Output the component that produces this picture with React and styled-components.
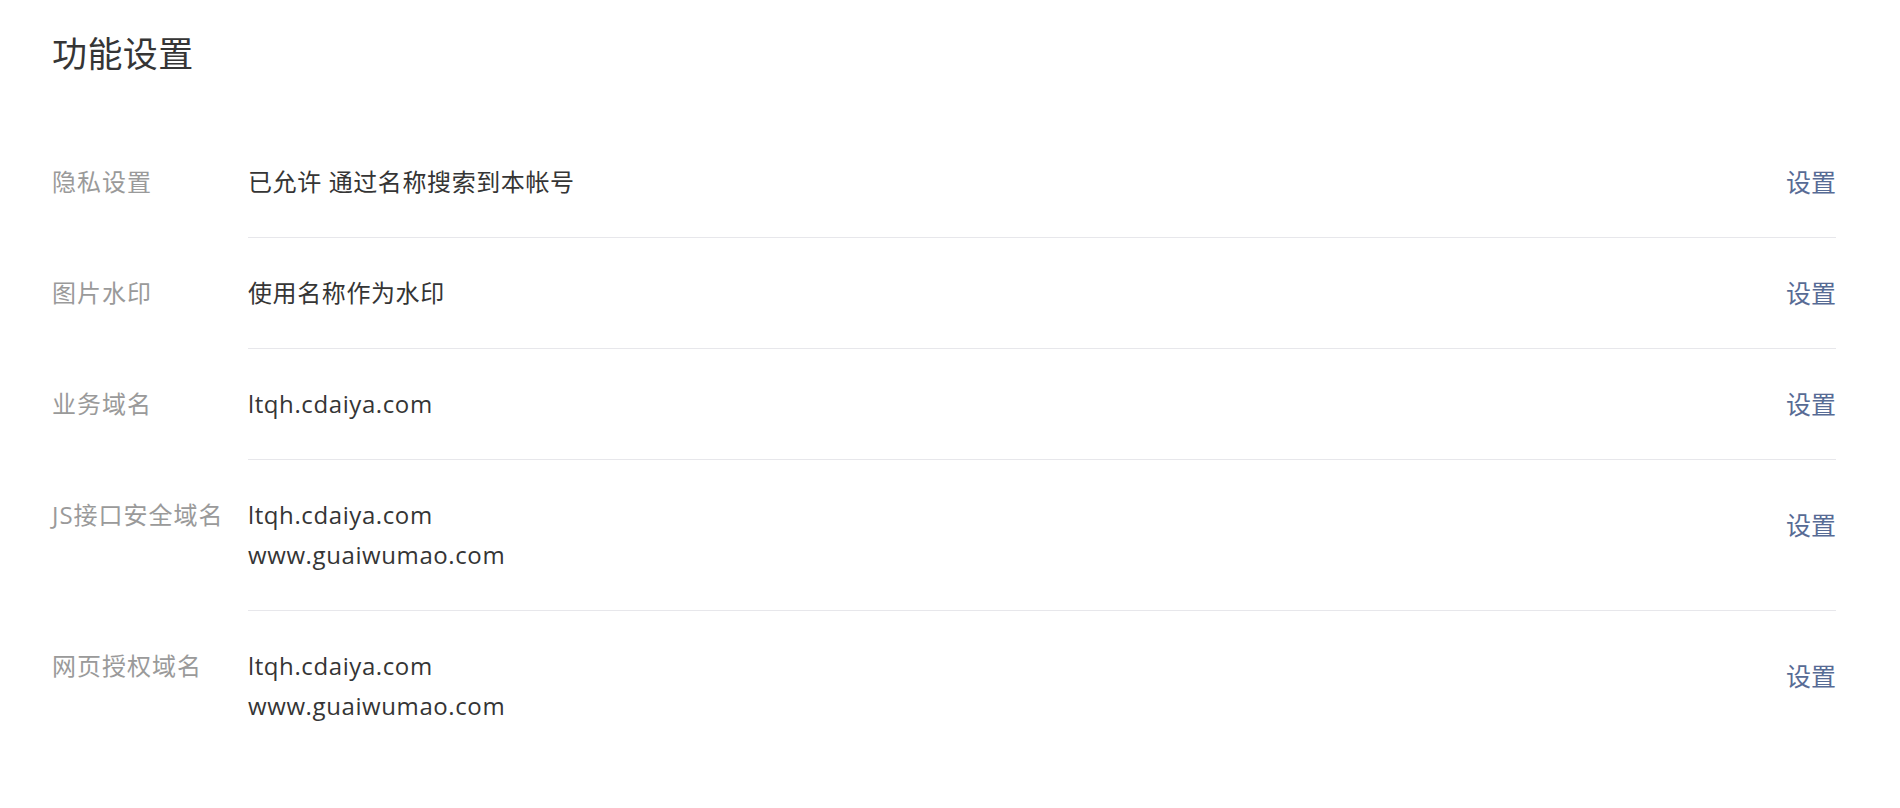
import React from "react";
import styled, { createGlobalStyle } from "styled-components";

const Global = createGlobalStyle`
  html, body {
    margin: 0;
    padding: 0;
    background: #ffffff;
  }
  body {
    font-family: "Open Sans", "Noto Sans CJK SC", sans-serif;
    color: #353535;
  }
`;

const Page = styled.div`
  padding: 30px 64px 40px 52px;
`;

const Title = styled.h2`
  margin: 0 0 49px;
  font-size: 35px;
  line-height: 48px;
  letter-spacing: 0.4px;
  font-weight: 400;
  color: #353535;
`;

const List = styled.div`
  display: flex;
  flex-direction: column;
`;

const Row = styled.div`
  display: flex;
  align-items: flex-start;
`;

const Label = styled.div`
  width: 196px;
  flex: none;
  padding-top: ${(p) => (p.$first ? 35 : 36)}px;
  font-size: 24px;
  line-height: 40px;
  letter-spacing: 1px;
  color: #9a9a9a;
  white-space: nowrap;
`;

const Body = styled.div`
  flex: 1;
  display: flex;
  align-items: ${(p) => (p.$multi ? "flex-start" : "center")};
  padding: 35px 0;
  border-top: ${(p) => (p.$first ? "none" : "1px solid #e7e7eb")};
`;

const Value = styled.div`
  flex: 1;
  font-size: 24px;
  line-height: 40px;
  letter-spacing: 0.6px;
  color: #353535;
`;

const Line = styled.div``;

const Action = styled.a`
  flex: none;
  margin-top: ${(p) => (p.$multi ? 10 : 0)}px;
  font-size: 25px;
  line-height: 40px;
  color: #576b95;
  text-decoration: none;
  cursor: pointer;
`;

const rows = [
  { label: "隐私设置", lines: ["已允许 通过名称搜索到本帐号"] },
  { label: "图片水印", lines: ["使用名称作为水印"] },
  { label: "业务域名", lines: ["ltqh.cdaiya.com"] },
  { label: "JS接口安全域名", lines: ["ltqh.cdaiya.com", "www.guaiwumao.com"] },
  { label: "网页授权域名", lines: ["ltqh.cdaiya.com", "www.guaiwumao.com"] },
];

export default function App() {
  return (
    <>
      <Global />
      <Page>
        <Title>功能设置</Title>
        <List>
          {rows.map((r, i) => {
            const multi = r.lines.length > 1;
            return (
              <Row key={r.label}>
                <Label $first={i === 0}>{r.label}</Label>
                <Body $first={i === 0} $multi={multi}>
                  <Value>
                    {r.lines.map((l) => (
                      <Line key={l}>{l}</Line>
                    ))}
                  </Value>
                  <Action $multi={multi}>设置</Action>
                </Body>
              </Row>
            );
          })}
        </List>
      </Page>
    </>
  );
}
